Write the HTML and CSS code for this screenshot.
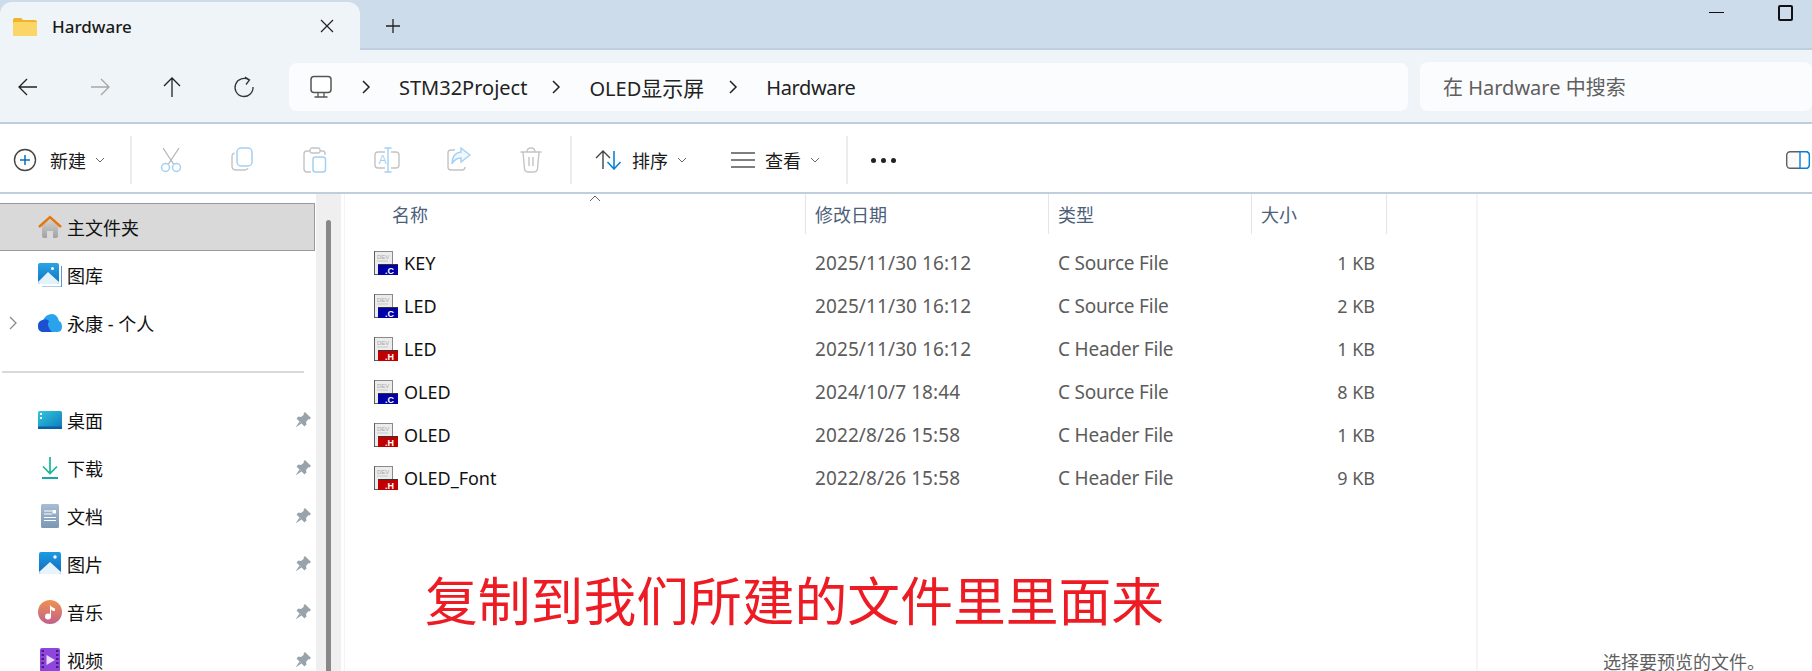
FILE: index.html
```html
<!DOCTYPE html>
<html lang="zh-CN">
<head>
    <meta charset="UTF-8">
    <title>Hardware - 文件资源管理器</title>
    <link rel="stylesheet" href="styles.css">
</head>
<body>

    <svg class="sprite" xmlns="http://www.w3.org/2000/svg">
        <symbol id="pin" viewBox="0 0 16 16">
            <path d="M10 0 L16 6 L14.500 7.500 L13.500 7 L11 10 L11.500 12.500 L9.500 14.500 L1.500 6.500 L3.500 4.500 L6 5 L9 2.500 L8.500 1.500 Z" fill="#98a3ac"/>
            <path d="M4.500 9.500 L0.500 15.500 L6.500 11.500 Z" fill="#98a3ac"/>
        </symbol>
        <symbol id="file-c" viewBox="0 0 24 24">
            <rect x="0.5" y="0.5" width="18" height="23" fill="#ececec" stroke="#8a8a8a"/>
            <path d="M0 24 V0 M0 24 H6" stroke="#333" stroke-width="1"/>
            <text x="3" y="8" font-size="6" fill="#a8a8a8" font-family="Liberation Sans">DEV</text>
            <path d="M3 10 H14" stroke="#c8c8c8"/>
            <rect x="4" y="14" width="20" height="10" fill="#0000a4"/>
            <rect x="4" y="13" width="20" height="1" fill="#333"/>
            <text x="11" y="22.500" font-size="9" font-weight="bold" fill="#fff" font-family="Liberation Sans">.C</text>
        </symbol>
        <symbol id="file-h" viewBox="0 0 24 24">
            <rect x="0.5" y="0.5" width="18" height="23" fill="#ececec" stroke="#8a8a8a"/>
            <path d="M0 24 V0 M0 24 H6" stroke="#333" stroke-width="1"/>
            <text x="3" y="8" font-size="6" fill="#a8a8a8" font-family="Liberation Sans">DEV</text>
            <path d="M3 10 H14" stroke="#c8c8c8"/>
            <rect x="4" y="14" width="20" height="10" fill="#c00000"/>
            <rect x="4" y="13" width="20" height="1" fill="#333"/>
            <text x="11" y="22.500" font-size="9" font-weight="bold" fill="#fff" font-family="Liberation Sans">.H</text>
        </symbol>
        <symbol id="caret" viewBox="0 0 10 6">
            <path d="M1 1 L5 5 L9 1" fill="none" stroke="#666" stroke-width="1"/>
        </symbol>
        <symbol id="chev" viewBox="0 0 10 16">
            <path d="M2 2 L8 8 L2 14" fill="none" stroke="#222" stroke-width="1.5"/>
        </symbol>
    </svg>

    <div class="window">
        <!-- Tabs -->
        <div class="tabbar">
            <div class="tab">
                <svg class="tab-icon" width="24" height="18" viewBox="0 0 24 18">
                    <path d="M0 2 Q0 0 2 0 H8 L10 2 H22 Q24 2 24 4 V16 Q24 18 22 18 H2 Q0 18 0 16 Z" fill="#f0b429"/>
                    <rect x="0" y="4" width="24" height="14" rx="1" fill="#fbd667"/>
                </svg>
                <span class="tab-title">Hardware</span>
                <svg class="tab-close" width="14" height="14" viewBox="0 0 14 14">
                    <path d="M1 1 L13 13 M13 1 L1 13" stroke="#222" stroke-width="1.2"/>
                </svg>
            </div>
            <svg class="tab-add" width="16" height="16" viewBox="0 0 16 16">
                <path d="M8 1 V15 M1 8 H15" stroke="#222" stroke-width="1.3"/>
            </svg>
            <div class="winctl">
                <span class="win-min"></span>
                <span class="win-max"></span>
            </div>
        </div>

        <!-- Address bar -->
        <div class="addressbar">
            <div class="nav">
                <svg width="48" height="24" viewBox="0 0 48 24"><path d="M15 12 H33 M23 4 L15 12 L23 20" fill="none" stroke="#222" stroke-width="1.3"/></svg>
                <svg width="48" height="24" viewBox="0 0 48 24"><path d="M15 12 H33 M25 4 L33 12 L25 20" fill="none" stroke="#a6a6a6" stroke-width="1.3"/></svg>
                <svg width="48" height="24" viewBox="0 0 48 24"><path d="M24 22 V3 M16 11 L24 3 L32 11" fill="none" stroke="#222" stroke-width="1.3"/></svg>
                <svg width="48" height="24" viewBox="0 0 48 24"><path d="M29 5 A9 9 0 1 0 33 12 M25 2 L29.500 5 L26 9.500" fill="none" stroke="#333" stroke-width="1.3"/></svg>
            </div>
            <div class="crumbs">
                <svg class="crumb-pc" width="24" height="24" viewBox="0 0 24 24">
                    <rect x="2" y="1.500" width="20" height="16" rx="3" fill="#fff" stroke="#555" stroke-width="1.500"/>
                    <path d="M9 18 V21.500 M15 18 V21.500 M5.500 22 H18.500" stroke="#555" stroke-width="1.300"/>
                </svg>
                <svg class="crumb-chev" width="10" height="16"><use href="#chev"/></svg>
                <span class="crumb">STM32Project</span>
                <svg class="crumb-chev" width="10" height="16"><use href="#chev"/></svg>
                <span class="crumb">OLED<span class="cjk">显示屏</span></span>
                <svg class="crumb-chev" width="10" height="16"><use href="#chev"/></svg>
                <span class="crumb crumb-last">Hardware</span>
            </div>
            <div class="search">在 Hardware 中搜索</div>
        </div>

        <!-- Command bar -->
        <div class="toolbar">
            <div class="cmd cmd-new">
                <svg width="24" height="24" viewBox="0 0 24 24">
                    <circle cx="12" cy="12" r="10.500" fill="#fff" stroke="#444" stroke-width="1.400"/>
                    <path d="M12 7 V17 M7 12 H17" stroke="#0a6fc2" stroke-width="1.500"/>
                </svg>
                <span>新建</span>
                <svg class="caret" width="10" height="6"><use href="#caret"/></svg>
            </div>
            <div class="sep"></div>
            <div class="tools">
                <div class="tool">
                    <svg width="24" height="26" viewBox="0 0 24 26">
                        <path d="M4 1 L14.500 17 M20 1 L9.500 17" stroke="#b5b5b5" stroke-width="1.300" fill="none"/>
                        <circle cx="6.500" cy="20.500" r="4" fill="none" stroke="#a4d0f3" stroke-width="1.500"/>
                        <circle cx="17.500" cy="20.500" r="4" fill="none" stroke="#a4d0f3" stroke-width="1.500"/>
                    </svg>
                </div>
                <div class="tool">
                    <svg width="24" height="24" viewBox="0 0 24 24">
                        <path d="M3.500 6 Q1 7 1 9 V19 Q1 23 5 23 H14 Q16 23 17 21" fill="none" stroke="#c4c4c4" stroke-width="1.400"/>
                        <rect x="6" y="1" width="15" height="18" rx="4" fill="none" stroke="#a4d0f3" stroke-width="1.500"/>
                    </svg>
                </div>
                <div class="tool">
                    <svg width="24" height="26" viewBox="0 0 24 26">
                        <path d="M7 4 H4 Q1 4 1 7 V22 Q1 25 4 25 H8 M17 4 H20 Q22 4 22 7 V8" fill="none" stroke="#c4c4c4" stroke-width="1.400"/>
                        <rect x="7" y="1" width="10" height="5" rx="2" fill="none" stroke="#c4c4c4" stroke-width="1.300"/>
                        <rect x="10" y="10" width="12.500" height="15" rx="2.500" fill="none" stroke="#a4d0f3" stroke-width="1.500"/>
                    </svg>
                </div>
                <div class="tool">
                    <svg width="26" height="26" viewBox="0 0 26 26">
                        <path d="M11 5 H4 Q1 5 1 8 V18 Q1 21 4 21 H11 M17 5 H22 Q25 5 25 8 V18 Q25 21 22 21 H17" fill="none" stroke="#c4c4c4" stroke-width="1.400"/>
                        <path d="M14 1 V25 M10.500 1 H17.500 M10.500 25 H17.500" stroke="#a4d0f3" stroke-width="1.400"/>
                        <text x="4.500" y="17" font-size="12" fill="#a4d0f3" font-family="Liberation Sans">A</text>
                    </svg>
                </div>
                <div class="tool">
                    <svg width="24" height="24" viewBox="0 0 24 24">
                        <path d="M8 3 H4 Q1 3 1 6 V20 Q1 23 4 23 H15 Q18 23 18 20" fill="none" stroke="#c4c4c4" stroke-width="1.400"/>
                        <path d="M14 1 L23 8 L14 15 V11 Q8 11 5 17 Q5 6 14 5 Z" fill="#f0f7fd" stroke="#a4d0f3" stroke-width="1.400"/>
                    </svg>
                </div>
                <div class="tool">
                    <svg width="22" height="26" viewBox="0 0 22 26">
                        <path d="M0.500 5 H21.500 M7 5 Q7 1 11 1 Q15 1 15 5" fill="none" stroke="#c4c4c4" stroke-width="1.400"/>
                        <path d="M3 5 L4.500 22 Q5 25 8 25 H14 Q17 25 17.500 22 L19 5" fill="none" stroke="#c4c4c4" stroke-width="1.400"/>
                        <path d="M9 10 V19 M13 10 V19" stroke="#c4c4c4" stroke-width="1.400"/>
                    </svg>
                </div>
            </div>
            <div class="sep"></div>
            <div class="cmd cmd-sort">
                <svg width="30" height="20" viewBox="0 0 30 20">
                    <path d="M9 19 V1 M2 8 L9 1 L16 8" fill="none" stroke="#444" stroke-width="1.400"/>
                    <path d="M20 1 V19 M13.500 12 L20 19 L26.500 12" fill="none" stroke="#0a84d6" stroke-width="1.600"/>
                </svg>
                <span>排序</span>
                <svg class="caret" width="10" height="6"><use href="#caret"/></svg>
            </div>
            <div class="cmd cmd-view">
                <svg width="24" height="16" viewBox="0 0 24 16">
                    <path d="M0 1 H24 M0 8 H24 M0 15 H24" stroke="#555" stroke-width="1.500"/>
                </svg>
                <span>查看</span>
                <svg class="caret" width="10" height="6"><use href="#caret"/></svg>
            </div>
            <div class="sep"></div>
            <div class="more"><i></i><i></i><i></i></div>
            <svg class="pane-toggle" width="24" height="18" viewBox="0 0 24 18">
                <rect x="0.700" y="0.700" width="22.600" height="16.600" rx="3.500" fill="#fafafa" stroke="#5f5f5f" stroke-width="1.400"/>
                <path d="M14 0.700 H19.800 Q23.300 0.700 23.300 4.200 V13.800 Q23.300 17.300 19.800 17.300 H14 Z" fill="#fff" stroke="#0a7fd6" stroke-width="1.400"/>
            </svg>
        </div>

        <div class="body">
            <!-- Navigation pane -->
            <div class="sidebar">
                <div class="side-row selected">
                    <svg width="24" height="24" viewBox="0 0 24 24">
                        <defs>
                            <linearGradient id="houseBody" x1="0" y1="0" x2="0" y2="1"><stop offset="0" stop-color="#d2d2d2"/><stop offset="1" stop-color="#a2a2a2"/></linearGradient>
                        </defs>
                        <path d="M4 11 L12 4 L20 11 V21 Q20 23 18 23 H15 V16 H9 V23 H6 Q4 23 4 21 Z" fill="url(#houseBody)"/>
                        <path d="M1 12 L12 2 L23 12" fill="none" stroke="#e4760c" stroke-width="2.400"/>
                    </svg>
                    <span>主文件夹</span>
                </div>
                <div class="side-row">
                    <svg width="24" height="24" viewBox="0 0 24 24">
                        <defs>
                            <linearGradient id="gallerySky" x1="0" y1="0" x2="0" y2="1"><stop offset="0" stop-color="#2aa4e4"/><stop offset="1" stop-color="#0c74c4"/></linearGradient>
                        </defs>
                        <path d="M4 23.500 H23 V3 H24 V24 H4 Z" fill="#5b9bd5"/>
                        <rect x="0" y="0" width="21" height="21" rx="2" fill="url(#gallerySky)"/>
                        <path d="M0 19 L10 9 L21 19 V19 Q21 21 19 21 H2 Q0 21 0 19 Z" fill="#e4f2fc"/>
                        <circle cx="14.500" cy="5.500" r="1.500" fill="#fff"/>
                    </svg>
                    <span>图库</span>
                </div>
                <div class="side-row">
                    <svg class="side-chev" width="8" height="14" viewBox="0 0 8 14"><path d="M1 1 L7 7 L1 13" fill="none" stroke="#8a8a8a" stroke-width="1.300"/></svg>
                    <svg width="24" height="18" viewBox="0 0 24 18">
                        <path d="M6 18 Q0 18 0 12 Q0 7 5 6 Q8 0 14 0 Q19 0 21 7 Q24 8 24 13 Q24 18 19 18 Z" fill="#29a3ec"/>
                        <path d="M6 18 Q0 18 0 12 Q0 7 5 6 Q8 4 11 7 Q8 12 14 18 Z" fill="#1c50d0"/>
                    </svg>
                    <span>永康 - 个人</span>
                </div>
                <div class="side-divider"></div>
                <div class="side-row">
                    <svg width="24" height="18" viewBox="0 0 24 18">
                        <defs>
                            <linearGradient id="desk" x1="0" y1="0" x2="1" y2="1"><stop offset="0" stop-color="#31c8dc"/><stop offset="1" stop-color="#0f78bc"/></linearGradient>
                        </defs>
                        <rect width="24" height="18" rx="1.500" fill="url(#desk)"/>
                        <rect y="15.500" width="24" height="2.500" fill="#0a5fa0"/>
                        <rect x="2" y="2" width="2" height="2" fill="#fff"/>
                        <rect x="2" y="6" width="2" height="2" fill="#fff"/>
                    </svg>
                    <span>桌面</span>
                    <svg class="pin" width="16" height="16"><use href="#pin"/></svg>
                </div>
                <div class="side-row">
                    <svg width="24" height="24" viewBox="0 0 24 24">
                        <path d="M12 1 V17 M5 10.500 L12 17.500 L19 10.500" fill="none" stroke="#18b795" stroke-width="1.700"/>
                        <path d="M4 22 H20" stroke="#18a8a0" stroke-width="2"/>
                    </svg>
                    <span>下载</span>
                    <svg class="pin" width="16" height="16"><use href="#pin"/></svg>
                </div>
                <div class="side-row">
                    <svg width="24" height="24" viewBox="0 0 24 24">
                        <defs>
                            <linearGradient id="docs" x1="0" y1="0" x2="0" y2="1"><stop offset="0" stop-color="#a7bdd4"/><stop offset="1" stop-color="#7c97b4"/></linearGradient>
                        </defs>
                        <rect x="3" y="0" width="18" height="24" rx="1.500" fill="url(#docs)"/>
                        <path d="M6 7 H14 M6 10 H14 M6 13.500 H18 M6 16.500 H18" stroke="#fff" stroke-width="1"/>
                        <rect x="14.500" y="6" width="3.500" height="3.500" fill="#fff"/>
                    </svg>
                    <span>文档</span>
                    <svg class="pin" width="16" height="16"><use href="#pin"/></svg>
                </div>
                <div class="side-row">
                    <svg width="24" height="24" viewBox="0 0 24 24">
                        <defs>
                            <linearGradient id="pics" x1="0" y1="0" x2="0" y2="1"><stop offset="0" stop-color="#1f9be2"/><stop offset="1" stop-color="#0f6cbd"/></linearGradient>
                        </defs>
                        <rect x="1" y="0" width="22" height="22" rx="2" fill="url(#pics)"/>
                        <path d="M1 20 L12 10 L23 20 Q23 22 21 22 H3 Q1 22 1 20 Z" fill="#e8f3fb"/>
                        <circle cx="17" cy="5" r="1.700" fill="#fff"/>
                    </svg>
                    <span>图片</span>
                    <svg class="pin" width="16" height="16"><use href="#pin"/></svg>
                </div>
                <div class="side-row">
                    <svg width="24" height="24" viewBox="0 0 24 24">
                        <defs>
                            <linearGradient id="music" x1="0" y1="0" x2="0" y2="1"><stop offset="0" stop-color="#f0914f"/><stop offset="1" stop-color="#c0608c"/></linearGradient>
                        </defs>
                        <circle cx="12" cy="12" r="12" fill="url(#music)"/>
                        <circle cx="10" cy="16.500" r="3" fill="#fff"/>
                        <path d="M12 16.500 V5 Q14 8 17 8.500 V11 Q14 11 13 9.500 V16.500 Z" fill="#fff"/>
                    </svg>
                    <span>音乐</span>
                    <svg class="pin" width="16" height="16"><use href="#pin"/></svg>
                </div>
                <div class="side-row">
                    <svg width="24" height="24" viewBox="0 0 24 24">
                        <rect x="2" y="0" width="20" height="24" rx="2" fill="#8f46dc"/>
                        <path d="M3.500 3 H6 M3.500 7 H6 M3.500 11 H6 M3.500 15 H6 M3.500 19 H6 M18 3 H20.500 M18 7 H20.500 M18 11 H20.500 M18 15 H20.500 M18 19 H20.500" stroke="#4a1a88" stroke-width="2"/>
                        <path d="M8.500 7 L17 12 L8.500 17 Z" fill="#eadcf8"/>
                    </svg>
                    <span>视频</span>
                    <svg class="pin" width="16" height="16"><use href="#pin"/></svg>
                </div>
            </div>
            <div class="scrolltrack"><div class="scrollthumb"></div></div>

            <!-- File list -->
            <div class="main">
                <svg class="sort-arrow" width="12" height="7" viewBox="0 0 12 7"><path d="M1 6 L6 1 L11 6" fill="none" stroke="#666" stroke-width="1"/></svg>
                <div class="list-head">
                    <div class="col">名称</div>
                    <div class="col">修改日期</div>
                    <div class="col">类型</div>
                    <div class="col">大小</div>
                </div>
                <div class="list-row">
                    <div class="name"><svg width="24" height="24"><use href="#file-c"/></svg>KEY</div>
                    <div class="cell date">2025/11/30 16:12</div>
                    <div class="cell kind">C Source File</div>
                    <div class="cell size">1 KB</div>
                </div>
                <div class="list-row">
                    <div class="name"><svg width="24" height="24"><use href="#file-c"/></svg>LED</div>
                    <div class="cell date">2025/11/30 16:12</div>
                    <div class="cell kind">C Source File</div>
                    <div class="cell size">2 KB</div>
                </div>
                <div class="list-row">
                    <div class="name"><svg width="24" height="24"><use href="#file-h"/></svg>LED</div>
                    <div class="cell date">2025/11/30 16:12</div>
                    <div class="cell kind">C Header File</div>
                    <div class="cell size">1 KB</div>
                </div>
                <div class="list-row">
                    <div class="name"><svg width="24" height="24"><use href="#file-c"/></svg>OLED</div>
                    <div class="cell date">2024/10/7 18:44</div>
                    <div class="cell kind">C Source File</div>
                    <div class="cell size">8 KB</div>
                </div>
                <div class="list-row">
                    <div class="name"><svg width="24" height="24"><use href="#file-h"/></svg>OLED</div>
                    <div class="cell date">2022/8/26 15:58</div>
                    <div class="cell kind">C Header File</div>
                    <div class="cell size">1 KB</div>
                </div>
                <div class="list-row">
                    <div class="name"><svg width="24" height="24"><use href="#file-h"/></svg>OLED_Font</div>
                    <div class="cell date">2022/8/26 15:58</div>
                    <div class="cell kind">C Header File</div>
                    <div class="cell size">9 KB</div>
                </div>
                <div class="note">复制到我们所建的文件里里面来</div>
            </div>

            <!-- Preview pane -->
            <div class="preview">选择要预览的文件。</div>
        </div>
    </div>

</body>
</html>
```

FILE: styles.css
```css
body {
    margin: 0;
    font-family: "Noto Sans", "Noto Sans CJK SC", sans-serif;
    background: #fff;
    color: #111;
}

.sprite {
    display: none;
}

.window {
    width: 1812px;
    height: 671px;
    overflow: hidden;
    display: flex;
    flex-direction: column;
}

svg {
    flex-shrink: 0;
    display: block;
}

/* Tabs */
.tabbar {
    height: 50px;
    box-sizing: border-box;
    background: #ccdcea;
    border-bottom: 2px solid #bfcfdf;
    display: flex;
    align-items: flex-start;
}

.tab {
    width: 360px;
    height: 48px;
    box-sizing: border-box;
    margin-top: 2px;
    padding: 0 24px 0 13px;
    background: #eff4f8;
    border-radius: 12px 12px 0 0;
    display: flex;
    align-items: center;
    position: relative;
}

.tab-icon {
    margin-top: 2px;
}

.tab-title {
    margin-left: 15px;
    font-size: 17px;
    font-weight: 500;
    color: #1a1a1a;
}

.tab-close {
    margin-left: auto;
    margin-right: 2px;
}

.tab-add {
    margin: 18px 0 0 25px;
}

.winctl {
    margin-left: auto;
    margin-right: 19px;
    display: flex;
    align-items: flex-start;
    gap: 54px;
}

.win-min {
    width: 15px;
    height: 1px;
    margin-top: 12px;
    background: #111;
}

.win-max {
    width: 11px;
    height: 12px;
    margin-top: 5px;
    border: 2px solid #111;
    border-radius: 2px;
}

/* Address bar */
.addressbar {
    height: 74px;
    box-sizing: border-box;
    background: #eff4f8;
    border-bottom: 2px solid #bfcddc;
    padding-bottom: 11px;
    display: flex;
    align-items: flex-end;
}

.nav {
    width: 289px;
    height: 48px;
    box-sizing: border-box;
    padding-left: 4px;
    display: flex;
    align-items: center;
    gap: 24px;
}

.crumbs {
    width: 1119px;
    height: 48px;
    box-sizing: border-box;
    padding-left: 20px;
    background: #fbfcfe;
    border-radius: 8px;
    display: flex;
    align-items: center;
    font-size: 20px;
    color: #222;
}

.crumb-pc {
    margin-right: 28px;
}

.crumb-chev {
    margin-right: 28px;
}

.crumb {
    margin-right: 24px;
}

.crumb-last {
    letter-spacing: -0.4px;
}

.cjk {
    font-size: 21px;
}

.search {
    flex: 1;
    height: 49px;
    box-sizing: border-box;
    margin-left: 12px;
    padding-left: 23px;
    background: #fbfcfe;
    border-radius: 8px;
    display: flex;
    align-items: center;
    font-size: 20px;
    color: #5f5f5f;
}

/* Command bar */
.toolbar {
    height: 70px;
    box-sizing: border-box;
    padding-top: 4px;
    background: #fff;
    border-bottom: 2px solid #bfcddc;
    display: flex;
    align-items: center;
    position: relative;
}

.cmd {
    display: flex;
    align-items: center;
    font-size: 18px;
    color: #1a1a1a;
}

.cmd-new {
    width: 130px;
    box-sizing: border-box;
    padding-left: 13px;
}

.cmd-new span {
    margin-left: 13px;
}

.caret {
    margin-left: 9px;
}

.sep {
    width: 2px;
    height: 48px;
    background: #ececec;
}

.tools {
    display: flex;
    padding: 0 3px;
}

.tool {
    width: 72px;
    display: flex;
    justify-content: center;
}

.cmd-sort {
    margin-left: 22px;
}

.cmd-sort span {
    margin-left: 8px;
}

.cmd-view {
    margin-left: 44px;
    margin-right: 26px;
}

.cmd-view span {
    margin-left: 10px;
}

.more {
    margin-left: 23px;
    display: flex;
    gap: 5px;
}

.more i {
    width: 5px;
    height: 5px;
    border-radius: 50%;
    background: #222;
}

.pane-toggle {
    margin-left: auto;
    margin-right: 2px;
}

/* Body */
.body {
    flex: 1;
    display: flex;
    min-height: 0;
}

.sidebar {
    width: 316px;
    box-sizing: border-box;
    padding-top: 9px;
    font-size: 18px;
}

.side-row {
    height: 48px;
    box-sizing: border-box;
    padding: 0 5px 0 38px;
    display: flex;
    align-items: center;
    position: relative;
}

.side-row span {
    position: absolute;
    left: 67px;
}

.side-row.selected {
    width: 315px;
    background: #d9d9d9;
    border: 1px solid #999;
    border-left: none;
}

.side-chev {
    position: absolute;
    left: 9px;
}

.side-divider {
    height: 2px;
    width: 302px;
    margin: 24px 0 23px 2px;
    background: #d9d9d9;
}

.pin {
    margin-left: auto;
}

.scrolltrack {
    width: 25px;
    background: #efefef;
    box-sizing: border-box;
    padding: 26px 10px 0;
}

.scrollthumb {
    height: 100%;
    background: #888;
    border-radius: 3px 3px 0 0;
}

.main {
    width: 1134px;
    margin-left: 3px;
    border-left: 1px solid #f3f3f3;
    border-right: 2px solid #f5f5f5;
    box-sizing: border-box;
    position: relative;
}

.sort-arrow {
    position: absolute;
    left: 244px;
    top: 1px;
}

.list-head {
    height: 40px;
    margin-bottom: 7px;
    display: grid;
    grid-template-columns: 461px 243px 203px 135px;
    font-size: 18px;
}

.col {
    padding-left: 9px;
    box-sizing: border-box;
    border-right: 1px solid #e5e5e5;
    display: flex;
    align-items: center;
    color: #4c607a;
}

.col:first-child {
    padding-left: 47px;
}

.list-row {
    height: 43px;
    display: grid;
    grid-template-columns: 460px 243px 203px 135px;
    align-items: center;
    font-size: 18px;
    color: #5c5c5c;
}

.name {
    padding-left: 29px;
    display: flex;
    align-items: center;
    gap: 6px;
    color: #111;
}

.cell {
    padding-left: 10px;
}

.date {
    font-size: 19px;
    letter-spacing: 0.1px;
}

.kind {
    font-size: 19px;
    letter-spacing: -0.2px;
}

.size {
    padding: 0 11px 0 0;
    text-align: right;
}

.note {
    position: absolute;
    left: 80px;
    top: 372px;
    font-size: 52.8px;
    line-height: 64px;
    white-space: nowrap;
    color: #ed1c24;
    font-family: "Noto Sans CJK SC", sans-serif;
}

.preview {
    flex: 1;
    padding-left: 125px;
    align-self: flex-end;
    font-size: 18px;
    line-height: 18px;
    color: #5f5f5f;
    white-space: nowrap;
}
```
